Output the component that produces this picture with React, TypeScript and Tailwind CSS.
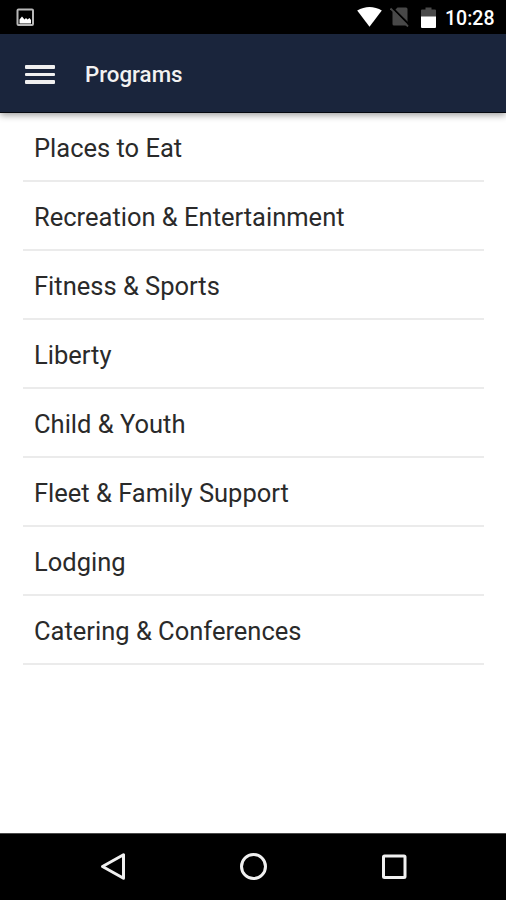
import React from 'react';

const programs = [
    'Places to Eat',
    'Recreation & Entertainment',
    'Fitness & Sports',
    'Liberty',
    'Child & Youth',
    'Fleet & Family Support',
    'Lodging',
    'Catering & Conferences',
];

const StatusBar: React.FC = () => (
    <div className="flex h-[34px] shrink-0 items-center bg-black pr-[10px] pl-4 text-white">
        <svg className="mt-px" width="20" height="20" viewBox="0 0 20 20" fill="none">
            <rect x="1.5" y="1.5" width="15.500" height="15.500" rx="1" stroke="#b8b8b8" strokeWidth="2" />
            <path d="M3.500 15.500V11.500l2.500-3 2.500 3 1.500-1.500 1.500 1.500 2-1.500 1.500 2v3.500z" fill="#fff" />
        </svg>
        <div className="ml-auto flex items-center">
            <svg width="26" height="20" viewBox="0 0 26 20" fill="#fff">
                <path d="M.2 3.500C4 1.200 8.500 0 12.500 0s9 1.200 12.300 3.500L12.500 19.700z" />
            </svg>
            <svg className="ml-[7px]" width="20" height="20" viewBox="0 0 20 20">
                <path d="M7.500 .5H16q1.500 0 1.500 1.500v15q0 1.500-1.500 1.500H4q-1.500 0-1.500-1.500V5.500z" fill="#484848" />
                <path d="M2 .5l18 18" stroke="#000" strokeWidth="2" />
                <path d="M.5 1.500l17.500 18" stroke="#484848" strokeWidth="1.800" />
            </svg>
            <svg className="ml-[11px]" width="16" height="22" viewBox="0 0 16 22">
                <path d="M0 4.500Q0 3.500 1 3.500h3.500V1.500h6v2h3.500q1 0 1 1V11H0z" fill="#4a4a4a" />
                <path d="M0 10.500h15V21q0 1-1 1H1q-1 0-1-1z" fill="#fff" />
            </svg>
            <span className="mt-[3px] ml-[8px] w-[51px] text-[19.5px] leading-none font-medium whitespace-nowrap">10:28</span>
        </div>
    </div>
);

const Header: React.FC = () => (
    <header className="z-10 flex h-[79px] shrink-0 items-center border-b border-[#05080f] bg-[#1a253c] pt-0.5 pl-[25px] text-white shadow-[0_2px_7px_rgba(0,0,0,0.4)]">
        <button className="flex w-[30px] flex-col gap-1" aria-label="Menu">
            <span className="h-1 rounded-[1px] bg-[#f0f0f0]" />
            <span className="h-[3px] rounded-[1px] bg-[#f0f0f0]" />
            <span className="h-1 rounded-[1px] bg-[#f0f0f0]" />
        </button>
        <h1 className="ml-[30px] text-[22.3px] leading-none font-medium text-[#f2f2f2]">Programs</h1>
    </header>
);

const NavBar: React.FC = () => (
    <nav className="flex h-[67px] shrink-0 items-center border-t border-[#4a4a4a] bg-black">
        <svg className="ml-[99px]" width="28" height="30" viewBox="0 0 28 30" fill="none">
            <path d="M3.500 14.500L24.500 2.700v23.600z" stroke="#f0f0f0" strokeWidth="3" strokeLinejoin="round" />
        </svg>
        <svg className="ml-[112px]" width="30" height="30" viewBox="0 0 30 30" fill="none">
            <circle cx="14.500" cy="14.500" r="12" stroke="#f0f0f0" strokeWidth="3" />
        </svg>
        <svg className="ml-[110px]" width="30" height="30" viewBox="0 0 30 30" fill="none">
            <rect x="4.500" y="4" width="21.500" height="21.500" rx="1" stroke="#f0f0f0" strokeWidth="3" />
        </svg>
    </nav>
);

export default function App() {
    return (
        <div className="flex h-[900px] w-[506px] flex-col overflow-hidden bg-white font-['Roboto',sans-serif]">
            <StatusBar />
            <Header />
            <main className="flex-1 pr-[22px] pl-[23px]">
                <ul>
                    {programs.map(name => (
                        <li
                            key={name}
                            className="flex h-[69px] items-center border-b-2 border-[#ebebeb] pt-[3px] pl-[11px] text-[25.5px] text-[#2a2a2a]"
                        >
                            {name}
                        </li>
                    ))}
                </ul>
            </main>
            <NavBar />
        </div>
    );
}
